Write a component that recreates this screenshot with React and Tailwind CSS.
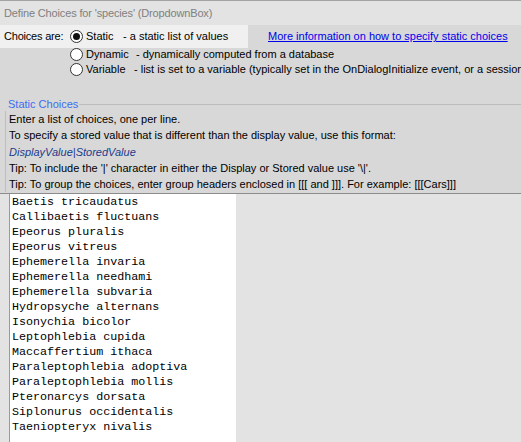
const species = [
  'Baetis tricaudatus',
  'Callibaetis fluctuans',
  'Epeorus pluralis',
  'Epeorus vitreus',
  'Ephemerella invaria',
  'Ephemerella needhami',
  'Ephemerella subvaria',
  'Hydropsyche alternans',
  'Isonychia bicolor',
  'Leptophlebia cupida',
  'Maccaffertium ithaca',
  'Paraleptophlebia adoptiva',
  'Paraleptophlebia mollis',
  'Pteronarcys dorsata',
  'Siplonurus occidentalis',
  'Taeniopteryx nivalis',
];

const Radio = ({ checked }) => (
  <span className="w-[13px] h-[13px] rounded-full border border-[#333] bg-white flex items-center justify-center shrink-0">
    {checked && <span className="w-[7px] h-[7px] rounded-full bg-[#111]" />}
  </span>
);

const App = () => {
  return (
    <div
      className="w-[521px] h-[442px] overflow-hidden bg-[#d8d8d8] border-t border-[#a3a3a3] text-[11px] text-black flex flex-col"
      style={{ fontFamily: '"Liberation Sans", Arial, sans-serif' }}
    >
      {/* dialog caption */}
      <div className="h-[24px] shrink-0 bg-[#e3e3e3] pl-[4px] flex items-center text-[#808080] tracking-[-0.15px] whitespace-nowrap">
        Define Choices for 'species' (DropdownBox)
      </div>

      {/* choice source */}
      <div className="flex h-[23px] shrink-0 items-center whitespace-nowrap">
        <div className="w-[248px] shrink-0 h-full bg-[#f0f0f0] flex items-center pl-[4px]">
          <span className="w-[66px] shrink-0 tracking-[-0.2px]">Choices are:</span>
          <Radio checked />
          <span className="ml-[3px] w-[37px] shrink-0">Static</span>
          <span>- a static list of values</span>
        </div>
        <a href="#" className="ml-[20px] text-[#0000ee] underline">
          More information on how to specify static choices
        </a>
      </div>
      <div className="-mt-px flex items-center h-[15px] shrink-0 pl-[70px] whitespace-nowrap">
        <Radio />
        <span className="ml-[3px] w-[50px] shrink-0">Dynamic</span>
        <span>- dynamically computed from a database</span>
      </div>
      <div className="flex items-center h-[15px] shrink-0 pl-[70px] whitespace-nowrap">
        <Radio />
        <span className="ml-[3px] w-[48px] shrink-0">Variable</span>
        <span>- list is set to a variable (typically set in the OnDialogInitialize event, or a session</span>
      </div>

      {/* static choices group */}
      <div className="mt-[20px] flex items-center h-[14px] shrink-0 pl-[8px] whitespace-nowrap">
        <span className="text-[#3d6cf0]">Static Choices</span>
        <span className="flex-1 h-px bg-[#bdbdbd] ml-[1px]" />
      </div>
      <div className="ml-[5px] shrink-0 border-l border-[#bdbdbd] pl-[3px] leading-[16.25px] whitespace-nowrap">
        <div>Enter a list of choices, one per line.</div>
        <div>To specify a stored value that is different than the display value, use this format:</div>
        <div className="italic text-[#1c3a8c]">DisplayValue|StoredValue</div>
        <div>Tip: To include the '|' character in either the Display or Stored value use '\|'.</div>
        <div>Tip: To group the choices, enter group headers enclosed in [[[ and ]]]. For example: [[[Cars]]]</div>
      </div>

      {/* choices editor */}
      <div className="mt-[1px] flex flex-1 border-t border-[#8c8c8c] bg-[#e3e3e3]">
        <div className="w-[9px] bg-[#e3e3e3]" />
        <div
          className="w-[227px] bg-white border-l border-[#9a9a9a] pl-[2px] pt-[1px] text-[11.7px] leading-[15px] whitespace-nowrap"
          style={{ fontFamily: '"Liberation Mono", "Courier New", monospace' }}
        >
          {species.map((s) => (
            <div key={s}>{s}</div>
          ))}
        </div>
      </div>
    </div>
  );
};

export default App;
